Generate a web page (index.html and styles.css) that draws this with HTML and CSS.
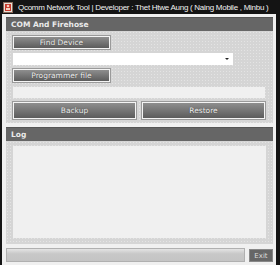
FILE: index.html
```html
<!DOCTYPE html>
<html lang="en">
<head>
    <meta charset="UTF-8">
    <title>Qcomm Network Tool</title>
    <link rel="stylesheet" href="styles.css">
</head>
<body>
    <div class="window">
        <div class="titlebar">
            <svg class="app-icon" width="10" height="11" viewBox="0 0 10 11">
                <rect x="0.5" y="0.5" width="9" height="10" fill="#e8e0d8" stroke="#8a6a5a"/>
                <rect x="2" y="2" width="6" height="7" fill="#c8382a"/>
                <circle cx="5" cy="4" r="1.3" fill="#f4d0c0"/>
                <rect x="3" y="6" width="4" height="2" fill="#f4d0c0"/>
            </svg>
            <span class="title">Qcomm Network Tool | Developer : Thet Htwe Aung ( Naing Mobile , Minbu )</span>
        </div>
        <div class="content">
            <div class="group">
                <div class="group-head">COM And Firehose</div>
                <div class="group-body">
                    <button class="btn btn-small">Find Device</button>
                    <div class="combo"><span class="arrow"></span></div>
                    <button class="btn btn-small">Programmer file</button>
                    <div class="field"></div>
                    <div class="btn-row">
                        <button class="btn btn-big">Backup</button>
                        <button class="btn btn-big">Restore</button>
                    </div>
                </div>
            </div>
            <div class="group log">
                <div class="group-head">Log</div>
                <div class="group-body">
                    <div class="log-area"></div>
                </div>
            </div>
            <div class="footer">
                <div class="progress"></div>
                <button class="exit">Exit</button>
            </div>
        </div>
    </div>
</body>
</html>
```

FILE: styles.css
```css
body {
    margin: 0;
    padding: 0;
    background-color: #1a1a1a;
    font-family: "Liberation Sans", Arial, sans-serif;
}
.window {
    width: 280px;
    height: 265px;
    box-sizing: border-box;
    background-color: #141414;
    padding: 0 4px 0 2px;
    display: flex;
    flex-direction: column;
}
.titlebar {
    height: 14px;
    display: flex;
    align-items: center;
    gap: 5px;
    padding-left: 1px;
    overflow: hidden;
}
.app-icon {
    flex: none;
}
.title {
    color: #f2f2f2;
    font-size: 8px;
    white-space: nowrap;
    letter-spacing: -0.27px;
}
.content {
    flex: 1;
    background-color: #f0f0f0;
    padding: 3px 3px 0 4px;
    display: flex;
    flex-direction: column;
    gap: 4px;
}
.group-head {
    height: 14px;
    line-height: 14px;
    background-color: #666;
    color: #ebebeb;
    font-family: "DejaVu Sans", sans-serif;
    font-size: 7.5px;
    font-weight: bold;
    padding-left: 5px;
    border-top: 1px solid #555;
    box-sizing: border-box;
}
.group-body {
    background-color: #d5d5d5;
    background-image: radial-gradient(circle, #e4e4e4 0.7px, transparent 0.9px);
    background-size: 3px 3px;
    padding: 5px 7px 4px;
    display: flex;
    flex-direction: column;
    align-items: flex-start;
    gap: 4px;
}
.btn {
    font-family: "DejaVu Sans", sans-serif;
    font-size: 7.5px;
    color: #f0f0f0;
    text-shadow: 0 0 1px #333;
    background: linear-gradient(#8e8e8e, #5c5c5c);
    border: 1px solid #f4f4f4;
    outline: 1px solid #9a9a9a;
    padding: 0;
    margin: 0;
    cursor: pointer;
}
.btn-small {
    width: 97px;
    height: 13px;
}
.combo {
    width: 220px;
    height: 12px;
    background-color: #fff;
    position: relative;
}
.arrow {
    position: absolute;
    right: 4px;
    top: 5px;
    border-left: 2px solid transparent;
    border-right: 2px solid transparent;
    border-top: 2px solid #222;
}
.field {
    width: 252px;
    height: 11px;
    background-color: #f0f0f0;
    margin-top: 1px;
}
.btn-row {
    display: flex;
    gap: 6px;
    width: 252px;
}
.btn-big {
    height: 17px;
    flex: 1;
}
.log {
    flex: 1;
    display: flex;
    flex-direction: column;
}
.log .group-body {
    flex: 1;
    align-items: stretch;
    padding: 5px 7px 6px;
}
.log-area {
    flex: 1;
    background-color: #f0f0f0;
}
.footer {
    height: 17px;
    display: flex;
    align-items: flex-start;
    gap: 4px;
}
.progress {
    width: 239px;
    height: 14px;
    box-sizing: border-box;
    background: linear-gradient(#e4e4e4, #c8c8c8 40%, #c4c4c4);
    border: 1px solid #b0b0b0;
}
.exit {
    width: 24px;
    height: 13px;
    margin-top: 1px;
    padding: 0;
    background-color: #666;
    border: 1px solid #888;
    color: #ddd;
    font-family: "DejaVu Sans", sans-serif;
    font-size: 7px;
}
```
